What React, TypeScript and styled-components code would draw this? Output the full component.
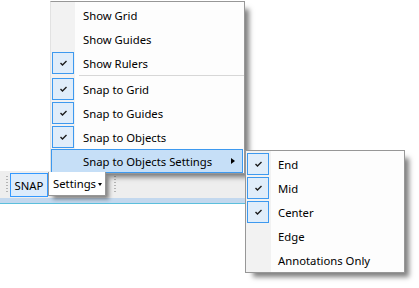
import React from 'react';
import styled, { createGlobalStyle } from 'styled-components';

const Global = createGlobalStyle`
  html, body { margin: 0; padding: 0; background: #ffffff; }
  body {
    font-family: "Noto Sans", "Open Sans", "Liberation Sans", sans-serif;
    font-size: 11.3px;
    color: #000;
  }
`;

const Stage = styled.div`
  position: relative;
  width: 419px;
  height: 288px;
  overflow: hidden;
  background: #ffffff;
  display: flex;
  flex-direction: column;
  padding-top: 171px;
  box-sizing: border-box;
`;

const Toolbar = styled.div`
  display: flex;
  align-items: flex-start;
  width: 300px;
  height: 27px;
  box-sizing: border-box;
  padding: 2px 0 0 6px;
  background: #eeeeee;
`;

const StatusBand = styled.div`
  width: 300px;
  height: 5px;
  background: #c3d8ee;
  border-bottom: 1px solid #5bbfdc;
`;

const Grip = styled.div<{ $gapLeft?: number }>`
  width: 2px;
  height: 18px;
  margin: 3px 2px 0 ${p => p.$gapLeft ?? 0}px;
  background-image: linear-gradient(#b4b4b4 50%, transparent 50%);
  background-size: 2px 3px;
`;

const SnapButton = styled.div`
  width: 38px;
  height: 24px;
  box-sizing: border-box;
  border: 1px solid #3399ff;
  background: #dcecfc;
  display: flex;
  align-items: center;
  justify-content: center;
`;

const SettingsButton = styled.div`
  position: relative;
  z-index: 3;
  width: 58px;
  height: 24px;
  margin-top: -1px;
  box-sizing: border-box;
  border: 1px solid #979797;
  border-top: none;
  background: #ffffff;
  display: flex;
  align-items: center;
  padding-left: 4px;
  gap: 2px;
  box-shadow: 4px 4px 4px -1px rgba(0, 0, 0, 0.45);
`;

const DownCaret = styled.span`
  width: 0;
  height: 0;
  margin-top: 1px;
  border-left: 2.5px solid transparent;
  border-right: 2.5px solid transparent;
  border-top: 3px solid #000;
`;

const MenuPanel = styled.div`
  position: absolute;
  z-index: 2;
  box-sizing: border-box;
  border: 1px solid #979797;
  padding: 1px 0 0 0;
  display: flex;
  flex-direction: column;
  background: linear-gradient(to right, #f2f2f2 0 24px, #fdfdfd 24px);
  box-shadow: 6px 6px 5px -2px rgba(0, 0, 0, 0.5);
`;

const MainMenu = styled(MenuPanel)`
  left: 50px;
  top: 1px;
  width: 195px;
  border-left-color: #e2e2e2;
  border-bottom: none;
  &::after {
    content: "";
    position: absolute;
    left: 54px;
    right: -1px;
    bottom: -1px;
    height: 1px;
    background: #979797;
  }
`;

const SubMenu = styled(MenuPanel)`
  left: 245px;
  top: 150px;
  width: 160px;
  z-index: 4;
  background: linear-gradient(to right, #f2f2f2 0 25px, #fdfdfd 25px);
`;

const Row = styled.div<{ $hot?: boolean }>`
  height: 24px;
  box-sizing: border-box;
  display: flex;
  align-items: center;
  margin-right: 1px;
  border: 1px solid ${p => (p.$hot ? '#3d99ef' : 'transparent')};
  background: ${p => (p.$hot ? '#c6dff7' : 'transparent')};
`;

const CheckCell = styled.div`
  width: 22px;
  height: 22px;
  flex: none;
  display: flex;
  align-items: center;
  justify-content: center;
`;

const CheckBox = styled.div`
  width: 22px;
  height: 22px;
  box-sizing: border-box;
  border: 1px solid #3d99ef;
  background: #e0edfa;
  display: flex;
  align-items: center;
  justify-content: center;
`;

const Label = styled.span`
  flex: 1;
  padding-left: 9px;
  white-space: nowrap;
`;

const SubArrow = styled.span`
  width: 0;
  height: 0;
  margin-right: 7px;
  border-top: 3.5px solid transparent;
  border-bottom: 3.5px solid transparent;
  border-left: 4px solid #000;
`;

const Separator = styled.div`
  height: 2px;
  margin: 0 0 0 28px;
  border-top: 1px solid #d7d7d7;
  box-sizing: border-box;
`;

const Check = () => (
  <svg width="9" height="8" viewBox="0 0 9 8">
    <path d="M1.5 4 L3.5 6 L7.5 2" fill="none" stroke="#1c1c1c" strokeWidth="1.4" />
  </svg>
);

type Item = { label: string; checked?: boolean; hot?: boolean; sub?: boolean } | 'sep';

const mainItems: Item[] = [
  { label: 'Show Grid' },
  { label: 'Show Guides' },
  { label: 'Show Rulers', checked: true },
  'sep',
  { label: 'Snap to Grid', checked: true },
  { label: 'Snap to Guides', checked: true },
  { label: 'Snap to Objects', checked: true },
  { label: 'Snap to Objects Settings', hot: true, sub: true },
];

const subItems: Item[] = [
  { label: 'End', checked: true },
  { label: 'Mid', checked: true },
  { label: 'Center', checked: true },
  { label: 'Edge' },
  { label: 'Annotations Only' },
];

const MenuRows = ({ items }: { items: Item[] }) => (
  <>
    {items.map((it, i) =>
      it === 'sep' ? (
        <Separator key={i} />
      ) : (
        <Row key={i} $hot={it.hot}>
          <CheckCell>{it.checked && <CheckBox><Check /></CheckBox>}</CheckCell>
          <Label>{it.label}</Label>
          {it.sub && <SubArrow />}
        </Row>
      )
    )}
  </>
);

export default function App() {
  return (
    <>
      <Global />
      <Stage>
        <Toolbar>
          <Grip />
          <SnapButton>SNAP</SnapButton>
          <SettingsButton>
            Settings
            <DownCaret />
          </SettingsButton>
          <Grip $gapLeft={8} />
        </Toolbar>
        <StatusBand />
        <MainMenu>
          <MenuRows items={mainItems} />
        </MainMenu>
        <SubMenu>
          <MenuRows items={subItems} />
        </SubMenu>
      </Stage>
    </>
  );
}
